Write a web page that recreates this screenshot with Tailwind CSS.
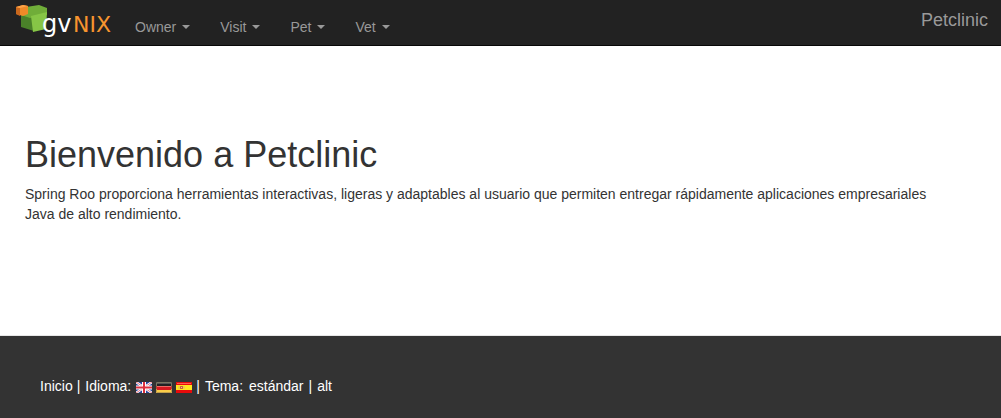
<!DOCTYPE html>
<html lang="es">
<head>
<meta charset="utf-8">
<meta name="viewport" content="width=device-width, initial-scale=1">
<title>Petclinic</title>
<script src="https://cdn.jsdelivr.net/npm/@tailwindcss/browser@4"></script>
</head>
<body class="flex min-h-screen flex-col bg-white font-['Liberation_Sans',Arial,sans-serif] text-sm leading-5 text-[#333]">
<header class="flex h-[46px] items-start border-b border-[#080808] bg-[#222] pl-4 pr-[13px] text-[#999]">
  <a href="#" aria-label="gvNIX" class="mt-1 shrink-0">
    <svg class="block h-9 w-[103px]" viewBox="0 0 103 36">
      <path d="M5 10 12 9l6 3v15l-13-4z" fill="#4a8129"/>
      <path d="M10 3 23 1l8 3v7l-17 3-9-3z" fill="#70ad39"/>
      <path d="M15 12 31 8l-1 17-13 3z" fill="#86c546"/>
      <path d="M0 3 7 1l5 1v8l-5 2-7-2z" fill="#ef8a28"/>
      <path d="M0 3 4 4v8l-4-2z" fill="#ca681d"/>
      <path d="M0 3 7 1l5 1-8 2z" fill="#ffa449"/>
      <g font-family="DejaVu Sans">
        <text x="26" y="28" font-size="24" fill="#fff">gv</text>
        <text x="57" y="28" font-size="22" fill="#f7952f">NIX</text>
      </g>
    </svg>
  </a>
  <nav class="flex pl-px">
    <button type="button" class="flex items-center gap-1.5 px-[15px] pt-[17px] pb-2">Owner <span class="border-x-4 border-t-4 border-x-transparent border-t-[#999]"></span></button>
    <button type="button" class="flex items-center gap-1.5 px-[15px] pt-[17px] pb-2">Visit <span class="border-x-4 border-t-4 border-x-transparent border-t-[#999]"></span></button>
    <button type="button" class="flex items-center gap-1.5 px-[15px] pt-[17px] pb-2">Pet <span class="border-x-4 border-t-4 border-x-transparent border-t-[#999]"></span></button>
    <button type="button" class="flex items-center gap-1.5 px-[15px] pt-[17px] pb-2">Vet <span class="border-x-4 border-t-4 border-x-transparent border-t-[#999]"></span></button>
  </nav>
  <a href="#" class="ml-auto pt-[10px] text-lg leading-5">Petclinic</a>
</header>
<main class="grow pl-[25px] pr-[45px] pt-[89px] pb-[111px]">
  <h1 class="mb-[10px] text-4xl leading-[39px]">Bienvenido a Petclinic</h1>
  <p>Spring Roo proporciona herramientas interactivas, ligeras y adaptables al usuario que permiten entregar rápidamente aplicaciones empresariales Java de alto rendimiento.</p>
</main>
<footer class="border-t border-[#e7e7e7] bg-[#333] px-10 pt-10 pb-[22px] text-white">
  <div class="flex items-center gap-1">
    <a href="#">Inicio</a><span>|</span><span class="px-px">Idioma:</span>
    <a href="#" aria-label="English" class="pt-[3px]">
      <svg class="block h-[11px] w-4" viewBox="0 0 16 11"><path fill="#29449b" d="M0 0h16v11H0z"/><path d="m0 0 16 11M16 0 0 11" stroke="#fff" stroke-width="2.4"/><path d="m0 0 16 11M16 0 0 11" stroke="#df5360" stroke-width=".8"/><path d="M8 0v11M0 5.5h16" stroke="#fff" stroke-width="4"/><path d="M8 0v11M0 5.5h16" stroke="#dc303e" stroke-width="2"/></svg>
    </a>
    <a href="#" aria-label="Deutsch" class="pt-[3px]">
      <svg class="block h-[11px] w-4" viewBox="0 0 16 11"><path fill="#222" d="M0 0h16v4H0z"/><path fill="#d71920" d="M0 4h16v4H0z"/><path fill="#f9cd48" d="M0 8h16v3H0z"/><path fill="#555" d="M1 1h14v1H1z"/><path fill="#ed6b67" d="M1 4h14v1H1z"/><path d="M.5 4V.5h15V4" fill="none" stroke="#777561"/><path d="M.5 4v3M15.5 4v3" stroke="#b44330"/><path d="M.5 7v3.5h15V7" fill="none" stroke="#c4a04a"/></svg>
    </a>
    <a href="#" aria-label="Español" class="pt-[3px]">
      <svg class="block h-[11px] w-4" viewBox="0 0 16 11"><path fill="#e80b0b" d="M0 0h16v11H0z"/><path fill="#ffe51d" d="M0 3h16v5H0z"/><path d="M1 1.5h14" stroke="#ff5b50"/><path d="M4 4h3v3H4z" fill="#c96535"/><path d="M3 4v3M8 4v3" stroke="#dfb575"/><path d="M5 5h1v1H5z" fill="#f5b5a5"/></svg>
    </a>
    <span>|</span><span class="px-px">Tema:</span><a href="#" class="px-px">estándar</a><span>|</span><a href="#" class="px-px">alt</a>
  </div>
</footer>
</body>
</html>
